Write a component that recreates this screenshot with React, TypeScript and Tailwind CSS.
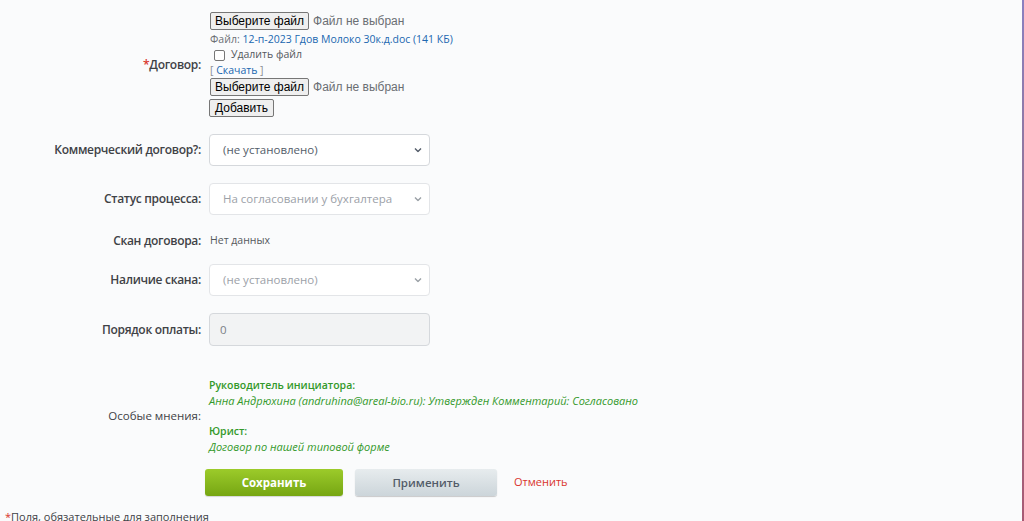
import React from 'react';

const label = "w-[201px] shrink-0 text-right text-[12px] tracking-[-0.3px] font-semibold text-[#3f4246]";
const nativeBtn = "h-[18px] px-[4px] border border-[#767676] rounded-[2px] bg-[#efefef] text-[12px] leading-[16px] text-black font-['Arial',sans-serif]";

function Chevron({ light }: { light?: boolean }) {
  return (
    <svg width="8" height="5" viewBox="0 0 8 5" className="absolute right-[7px] top-1/2 -translate-y-1/2">
      <path d="M1 1l3 3 3-3" fill="none" stroke={light ? '#9aa0a6' : '#535c69'} strokeWidth="1.4" />
    </svg>
  );
}

function Select({ text, disabled }: { text: string; disabled?: boolean }) {
  return (
    <div className={`relative w-[221px] h-[32px] rounded-[4px] border bg-white flex items-center pl-[13px] text-[11.5px] ${disabled ? 'border-[#e3e5e8] text-[#9ca1a8]' : 'border-[#d5d8dc] text-[#535c69]'}`}>
      {text}
      <Chevron light={disabled} />
    </div>
  );
}

function FileRow() {
  return (
    <div className="flex items-center gap-[4px] h-[18px]">
      <button className={nativeBtn}>Выберите файл</button>
      <span className="text-[12px] text-[#6a6e73] font-['Arial',sans-serif]">Файл не выбран</span>
    </div>
  );
}

export default function App() {
  return (
    <div className="relative w-[1024px] h-[521px] overflow-hidden bg-[#fafbfc] font-['Open_Sans',sans-serif]">
      <div className="absolute right-0 top-0 w-[2px] h-full bg-gradient-to-b from-[#8a80c0] via-[#94708c] to-[#a85a74]" />

      <div className="pt-[12px] flex flex-col">
        {/* Договор */}
        <div className="flex items-center">
          <div className={label}><span className="text-[#d9342b]">*</span>Договор:</div>
          <div className="ml-[9px] flex flex-col">
            <FileRow />
            <div className="mt-[3px] text-[10.5px] leading-[13px] text-[#6b6f75]">
              Файл: <span className="text-[#2067b0]">12-п-2023 Гдов Молоко 30к.д.doc (141 КБ)</span>
            </div>
            <div className="flex items-center h-[14px] mt-[2px]">
              <span className="ml-[4px] w-[11px] h-[11px] border border-[#767676] rounded-[2px] bg-white" />
              <span className="ml-[6px] text-[10.5px] text-[#55595e]">Удалить файл</span>
            </div>
            <div className="mt-[1px] text-[10.5px] leading-[14px] text-[#8a8f95]">[ <span className="text-[#2067b0]">Скачать</span> ]</div>
            <div className="mt-[1px]"><FileRow /></div>
            <div className="mt-[3px] -ml-[1px] flex">
              <button className={`${nativeBtn} px-[5px]`}>Добавить</button>
            </div>
          </div>
        </div>

        {/* Коммерческий */}
        <div className="flex items-center mt-[17px]">
          <div className={label}>Коммерческий договор?:</div>
          <div className="ml-[8px]"><Select text="(не установлено)" /></div>
        </div>

        <div className="flex items-center mt-[17px]">
          <div className={label}>Статус процесса:</div>
          <div className="ml-[8px]"><Select text="На согласовании у бухгалтера" disabled /></div>
        </div>

        <div className="flex items-center mt-[17px] h-[18px]">
          <div className={label}>Скан договора:</div>
          <div className="ml-[9px] text-[10.5px] text-[#55595e]">Нет данных</div>
        </div>

        <div className="flex items-center mt-[14px]">
          <div className={label}>Наличие скана:</div>
          <div className="ml-[8px]"><Select text="(не установлено)" disabled /></div>
        </div>

        <div className="flex items-center mt-[17px]">
          <div className={label}>Порядок оплаты:</div>
          <div className="ml-[8px] w-[221px] h-[33px] rounded-[4px] border border-[#d5d8dc] bg-[#f2f3f4] flex items-center pl-[10px] text-[11.5px] text-[#7b8087]">0</div>
        </div>

        {/* Особые мнения */}
        <div className="flex items-center mt-[31px]">
          <div className="w-[201px] shrink-0 text-right text-[11.5px] text-[#3f4246]">Особые мнения:</div>
          <div className="ml-[8px] flex flex-col text-[#33992a]">
            <div className="text-[10.5px] font-semibold leading-[16px]">Руководитель инициатора:</div>
            <div className="text-[11px] italic leading-[16px]">Анна Андрюхина (andruhina@areal-bio.ru): Утвержден Комментарий: Согласовано</div>
            <div className="text-[10.5px] font-semibold leading-[16px] mt-[14px]">Юрист:</div>
            <div className="text-[11px] italic leading-[16px]">Договор по нашей типовой форме</div>
          </div>
        </div>

        {/* Buttons */}
        <div className="flex items-center mt-[14px] ml-[205px]">
          <button className="w-[138px] h-[27px] rounded-[3px] bg-gradient-to-b from-[#9ccb2a] to-[#76a612] text-white text-[11.5px] font-bold shadow-[0_1px_1px_rgba(0,0,0,0.15)]">Сохранить</button>
          <button className="ml-[12px] w-[142px] h-[27px] rounded-[3px] bg-gradient-to-b from-[#e7ecee] to-[#ccd5da] text-[#535c69] text-[11.5px] font-semibold shadow-[0_1px_1px_rgba(0,0,0,0.2)]">Применить</button>
          <button className="ml-[17px] text-[11px] text-[#d9342b]">Отменить</button>
        </div>

        <div className="mt-[14px] ml-[5px] text-[11px] text-[#3f4246] leading-[14px]"><span className="text-[#d9342b]">*</span>Поля, обязательные для заполнения</div>
      </div>
    </div>
  );
}
